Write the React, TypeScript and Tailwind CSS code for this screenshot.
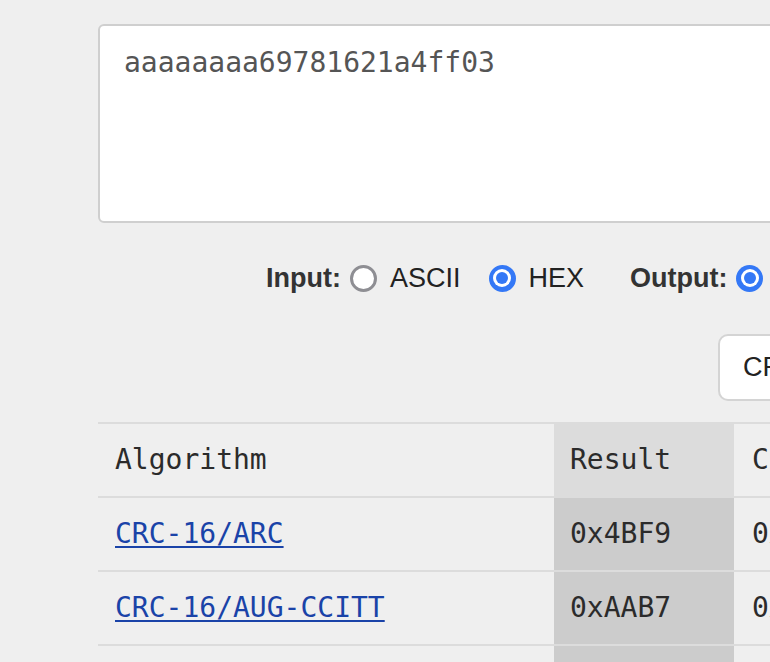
import React from "react";

const mono = { fontFamily: '"DejaVu Sans Mono", "Liberation Mono", monospace' };

const Radio = ({ checked }: { checked: boolean }) =>
  checked ? (
    <span className="flex h-[27px] w-[27px] shrink-0 items-center justify-center rounded-full bg-[#3478f6]">
      <span className="flex h-[18px] w-[18px] items-center justify-center rounded-full bg-white">
        <span className="block h-[12px] w-[12px] rounded-full bg-[#3478f6]"></span>
      </span>
    </span>
  ) : (
    <span className="block h-[27px] w-[27px] shrink-0 rounded-full border-[3px] border-[#8e8e93] bg-white"></span>
  );

const rows = [
  { name: "CRC-16/ARC", result: "0x4BF9", check: "0xBB3D" },
  { name: "CRC-16/AUG-CCITT", result: "0xAAB7", check: "0xE5CC" },
  { name: "CRC-16/BUYPASS", result: "0x2D5E", check: "0xFEE8" },
];

export default function App() {
  return (
    <div
      className="h-[662px] w-[770px] overflow-hidden bg-[#efefef]"
      style={{ fontFamily: '"Liberation Sans", Arial, sans-serif' }}
    >
      <div className="w-[1400px] pl-[98px] pt-[24px]">
        <textarea
          className="block h-[199px] w-[1100px] resize-none rounded-[6px] border-2 border-[#cfcfcf] bg-white pl-[24px] pt-[16px] text-[28px] text-[#555] outline-none"
          style={mono}
          defaultValue="aaaaaaaa69781621a4ff03"
          readOnly
        />

        <div className="mt-[38px] flex h-[34px] items-center pl-[168px] text-[27px] text-[#222]">
          <span className="font-bold text-[#333]">Input:</span>
          <span className="ml-[9px] block"><Radio checked={false} /></span>
          <span className="ml-[13px]">ASCII</span>
          <span className="ml-[28px] block"><Radio checked /></span>
          <span className="ml-[13px]">HEX</span>
          <span className="ml-[46px] font-bold text-[#333]">Output:</span>
          <span className="ml-[9px] block"><Radio checked /></span>
          <span className="ml-[12px]">HEX</span>
        </div>

        <div className="mt-[39px] pl-[620px]">
          <div className="flex h-[67px] w-[360px] items-center rounded-[10px] border-2 border-[#d4d4d4] bg-white pl-[23px] text-[27px] text-[#222]">
            CRC-16
          </div>
        </div>

        <table className="mt-[21px] w-[1200px] border-collapse text-[28px] text-[#2b2b2b]" style={mono}>
          <thead>
            <tr className="h-[74px] border-y-2 border-[#dcdcdc]">
              <th className="w-[456px] pl-[17px] text-left align-middle font-normal">Algorithm</th>
              <th className="w-[180px] bg-[#dcdcdc] pl-4 text-left align-middle font-normal">Result</th>
              <th className="pl-[18px] text-left align-middle font-normal">Check</th>
            </tr>
          </thead>
          <tbody>
            {rows.map((r) => (
              <tr key={r.name} className="h-[74px] border-b-2 border-[#dcdcdc]">
                <td className="pl-[17px] align-middle">
                  <a href="#" className="text-[#1a43a8] underline underline-offset-[3px]">
                    {r.name}
                  </a>
                </td>
                <td className="bg-[#cccccc] pl-4 align-middle">{r.result}</td>
                <td className="pl-[18px] align-middle">{r.check}</td>
              </tr>
            ))}
          </tbody>
        </table>
      </div>
    </div>
  );
}
